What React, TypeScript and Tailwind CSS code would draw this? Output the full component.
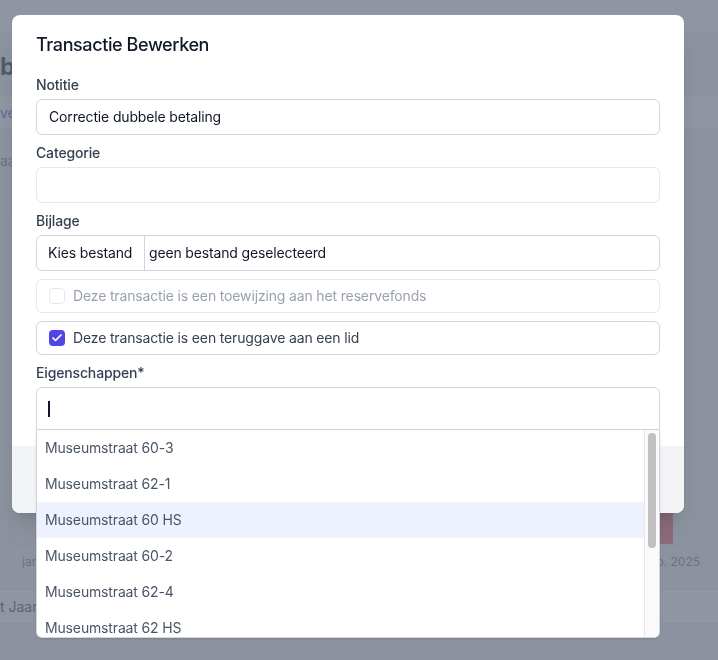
import { Check } from "lucide-react";

const properties = [
  "Museumstraat 60-3",
  "Museumstraat 62-1",
  "Museumstraat 60 HS",
  "Museumstraat 60-2",
  "Museumstraat 62-4",
  "Museumstraat 62 HS",
];

const gridLines = Array.from({ length: 11 }, (_, i) => 50 + i * 32.3);

function Background() {
  return (
    <div className="min-h-screen w-full bg-gray-100 overflow-hidden">
      <div className="h-[34px] bg-white border-b border-gray-200" />
      <div className="pt-[17px] w-[12px] overflow-hidden">
        <h1 className="text-2xl leading-8 font-bold text-gray-900 whitespace-nowrap">be</h1>
      </div>
      <div className="mt-[14px] h-[33px] flex items-center bg-white border-b border-gray-200">
        <span className="w-[12px] overflow-hidden text-sm text-indigo-600 whitespace-nowrap">ve</span>
      </div>
      <div className="mt-[21px] w-[12px] overflow-hidden">
        <p className="text-sm leading-5 text-gray-500 whitespace-nowrap">aa</p>
      </div>
      {/* chart behind the modal */}
      <svg width="718" height="418" className="block">
        {gridLines.map((y) => (
          <line key={y} x1="0" x2="718" y1={y} y2={y} stroke="#e5e7eb" strokeWidth="1" />
        ))}
        <line x1="9.5" x2="9.5" y1="50" y2="380" stroke="#e5e7eb" />
        <line x1="713.5" x2="713.5" y1="50" y2="380" stroke="#e5e7eb" />
        <rect x="660" y="230" width="13" height="143" fill="#f75a63" />
        <text x="22" y="395" fontSize="12" fill="#6b7280" fontFamily="Inter">jan</text>
        <text x="700" y="395" fontSize="12" fill="#6b7280" fontFamily="Inter" textAnchor="end">p. 2025</text>
      </svg>
      <div className="border-t border-b border-gray-200 bg-white h-[35px] flex items-center">
        <span className="text-sm text-gray-700 whitespace-nowrap">t Jaar</span>
      </div>
    </div>
  );
}

function Label({ children }: { children: React.ReactNode }) {
  return <label className="block mb-1 text-sm leading-5 font-medium text-gray-700">{children}</label>;
}

export default function App() {
  return (
    <div className="relative font-['Inter',_sans-serif]">
      <Background />
      <div className="fixed inset-0 bg-gray-500/75" />
      <div className="fixed inset-0 pl-3 pt-[15px]">
        <div className="w-[672px] rounded-lg bg-white shadow-xl tracking-[-0.15px]">
          <div className="px-6 pt-4 pb-4">
            <h3 className="text-lg leading-7 font-medium text-gray-900 tracking-[-0.4px]">Transactie Bewerken</h3>
            <form className="mt-4 space-y-2">
              <div>
                <Label>Notitie</Label>
                <div className="h-9 flex items-center px-3 border border-gray-300 rounded-md text-sm text-gray-900">
                  Correctie dubbele betaling
                </div>
              </div>
              <div>
                <Label>Categorie</Label>
                <div className="h-9 border border-gray-200 rounded-md" />
              </div>
              <div>
                <Label>Bijlage</Label>
                <div className="h-9 flex border border-gray-300 rounded-md text-sm text-gray-900">
                  <span className="w-[108px] flex items-center pl-[11px] border-r border-gray-300">Kies bestand</span>
                  <span className="flex items-center pl-1">geen bestand geselecteerd</span>
                </div>
              </div>
              <div className="h-[34px] flex items-center gap-2 px-3 border border-gray-200 rounded-md">
                <span className="w-4 h-4 rounded-[4px] border border-gray-200 bg-white" />
                <span className="text-sm text-gray-400">Deze transactie is een toewijzing aan het reservefonds</span>
              </div>
              <div className="h-[34px] flex items-center gap-2 px-3 border border-gray-300 rounded-md">
                <span className="w-4 h-4 rounded-[4px] bg-[#4f46e5] flex items-center justify-center">
                  <Check className="w-3 h-3 text-white" strokeWidth={3.5} />
                </span>
                <span className="text-sm text-gray-700">Deze transactie is een teruggave aan een lid</span>
              </div>
              <div>
                <Label>Eigenschappen*</Label>
                <div className="relative">
                  <div className="h-[43px] flex items-center pl-[11px] border border-gray-300 rounded-t-md">
                    <span className="w-[2px] h-4 bg-gray-900" />
                  </div>
                  <div className="absolute top-full left-0 right-0 z-10 h-[208px] flex bg-white border-x border-b border-gray-300 rounded-b-md overflow-hidden shadow-sm">
                    <ul className="flex-1">
                      {properties.map((p, i) => (
                        <li
                          key={p}
                          className={`h-9 flex items-center pl-2 text-sm text-gray-600 ${i === 2 ? "bg-indigo-50" : ""}`}
                        >
                          {p}
                        </li>
                      ))}
                    </ul>
                    <div className="w-[15px] bg-[#fafafa] border-l border-[#e8e8e8]">
                      <div className="mt-[3px] mx-auto w-2 h-[115px] rounded-full bg-[#c1c1c1]" />
                    </div>
                  </div>
                </div>
              </div>
            </form>
          </div>
          <div className="h-[67px] flex flex-row-reverse items-center gap-3 px-6 bg-[#f3f4f6] rounded-b-lg">
            <button className="px-4 py-2 rounded-md bg-indigo-600 text-sm font-medium text-white">Opslaan</button>
            <button className="px-4 py-2 rounded-md border border-gray-300 bg-white text-sm font-medium text-gray-700">Annuleren</button>
          </div>
        </div>
      </div>
    </div>
  );
}
